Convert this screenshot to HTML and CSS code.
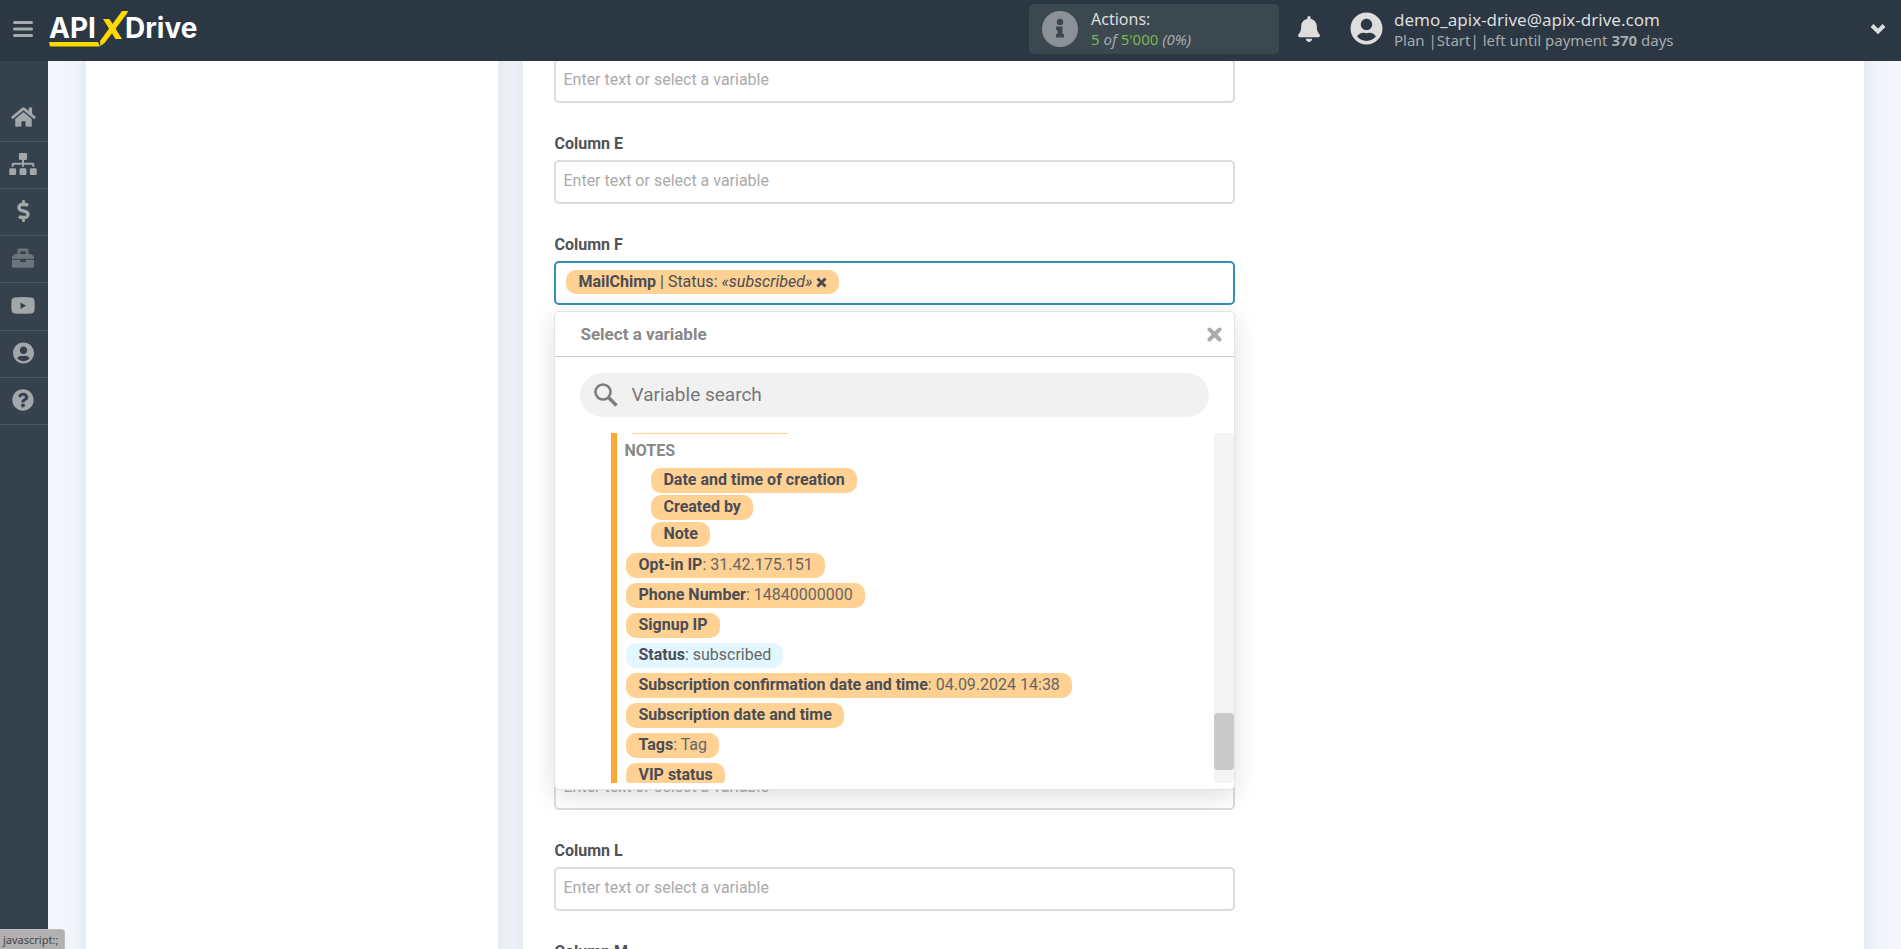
FILE: index.html
```html
<!DOCTYPE html>
<html lang="en">
<head>
<meta charset="utf-8">
<title>ApiX-Drive</title>
<link rel="stylesheet" href="styles.css">
</head>
<body>
<header class="topbar">
  <button class="icon-btn menu-btn" type="button" aria-label="Menu">
    <svg width="20" height="18" viewBox="0 0 20 18"><path d="M1.500 2.500h17M1.500 9h17M1.500 15.500h17" stroke="#a6abae" stroke-width="3" stroke-linecap="round"/></svg>
  </button>
  <a class="logo" href="#" aria-label="APIXDrive">
    <svg width="156" height="40" viewBox="0 0 156 40">
      <g fill="#fff" font-family="Inter, sans-serif" font-weight="700" font-size="28"><text x="0" y="29">API</text><text x="76" y="29">Drive</text></g>
      <g fill="#ffd800"><path d="M54 10h6.500l12.500 20h-6.500z"/><path d="M73 2h6l-1 2.500L56 33.500l-4.500 3.500-.5-5z"/><path d="M0 33h49l2 4.500H1z"/></g>
    </svg>
  </a>
  <div class="topbar-right">
    <div class="actions">
      <svg width="36" height="36" viewBox="0 0 36 36"><circle cx="18" cy="18" r="18" fill="#8b9297"/><circle cx="18" cy="11" r="3.200" fill="#3b4850"/><path d="M14 15.500h6.500V23H22v3.500h-8V23h1.500v-4H14z" fill="#3b4850"/></svg>
      <div class="actions-text">
        <div class="actions-title">Actions:</div>
        <div class="actions-count"><b>5</b> <i>of</i> <b>5'000</b> <i>(0%)</i></div>
      </div>
    </div>
    <button class="icon-btn bell" type="button" aria-label="Notifications">
      <svg width="22" height="26" viewBox="0 0 448 512" preserveAspectRatio="none" fill="#ddd"><path d="M224 512c35.320 0 63.970-28.650 63.970-64H160.030c0 35.350 28.650 64 63.970 64zm215.390-149.710c-19.320-20.760-55.470-51.990-55.470-154.290 0-77.700-54.480-139.900-127.940-155.160V32c0-17.670-14.320-32-31.980-32s-31.980 14.330-31.980 32v20.840C118.560 68.100 64.080 130.300 64.080 208c0 102.300-36.150 133.530-55.470 154.290-6 6.450-8.660 14.160-8.610 21.710.11 16.400 12.980 32 32.100 32h383.800c19.120 0 32-15.600 32.100-32 .05-7.550-2.610-15.270-8.610-21.710z"/></svg>
    </button>
    <div class="account">
      <svg width="33" height="33" viewBox="0 0 496 512" fill="#ddd"><path d="M248 8C111 8 0 119 0 256s111 248 248 248 248-111 248-248S385 8 248 8zm0 96c48.600 0 88 39.400 88 88s-39.400 88-88 88-88-39.400-88-88 39.400-88 88-88zm0 344c-58.700 0-111.300-26.600-146.500-68.200 18.800-35.400 55.600-59.800 98.500-59.800 2.400 0 4.800.4 7.100 1.100 13 4.200 26.600 6.900 40.900 6.900 14.300 0 28-2.700 40.900-6.900 2.300-.7 4.700-1.100 7.100-1.100 42.900 0 79.700 24.400 98.500 59.800C359.300 421.400 306.700 448 248 448z"/></svg>
      <div>
        <div class="account-mail">demo_apix-drive@apix-drive.com</div>
        <div class="account-plan">Plan |Start| left until payment <b>370</b> days</div>
      </div>
    </div>
    <button class="icon-btn" type="button" aria-label="Account menu">
      <svg width="16" height="12" viewBox="0 0 16 12"><path d="M2 2.500l6 6 6-6" fill="none" stroke="#ddd" stroke-width="4"/></svg>
    </button>
  </div>
</header>

<nav class="sidebar" aria-label="Main">
  <a href="#" aria-label="Home"><svg width="25" height="22" viewBox="0 0 576 512"><path d="M280.370 148.260L96 300.110V464a16 16 0 0 0 16 16l112.060-.29a16 16 0 0 0 15.920-16V368a16 16 0 0 1 16-16h64a16 16 0 0 1 16 16v95.640a16 16 0 0 0 16 16.050L464 480a16 16 0 0 0 16-16V300L295.670 148.260a12.190 12.190 0 0 0-15.300 0zM571.600 251.470L488 182.560V44.050a12 12 0 0 0-12-12h-56a12 12 0 0 0-12 12v72.610L318.470 43a48 48 0 0 0-61 0L4.340 251.470a12 12 0 0 0-1.600 16.900l25.500 31A12 12 0 0 0 45.150 301l235.220-193.740a12.190 12.190 0 0 1 15.300 0L530.900 301a12 12 0 0 0 16.900-1.600l25.500-31a12 12 0 0 0-1.700-16.930z"/></svg></a>
  <a href="#" aria-label="Connections"><svg width="28" height="22" viewBox="0 0 640 512"><path d="M128 352H32c-17.670 0-32 14.330-32 32v96c0 17.670 14.330 32 32 32h96c17.670 0 32-14.330 32-32v-96c0-17.670-14.330-32-32-32zm-24-80h192v48h48v-48h192v48h48v-57.590c0-21.170-17.230-38.410-38.410-38.410H344v-64h40c17.670 0 32-14.330 32-32V32c0-17.670-14.330-32-32-32H256c-17.670 0-32 14.330-32 32v96c0 17.670 14.330 32 32 32h40v64H94.410C73.230 224 56 241.230 56 262.410V320h48v-48zm264 80h-96c-17.670 0-32 14.330-32 32v96c0 17.670 14.330 32 32 32h96c17.670 0 32-14.330 32-32v-96c0-17.670-14.330-32-32-32zm240 0h-96c-17.670 0-32 14.330-32 32v96c0 17.670 14.330 32 32 32h96c17.670 0 32-14.330 32-32v-96c0-17.670-14.330-32-32-32z"/></svg></a>
  <a href="#" aria-label="Payments"><svg width="13" height="22" viewBox="0 0 288 512"><path d="M209.200 233.400l-108-31.600C88.700 198.200 80 186.500 80 173.500c0-16.300 13.200-29.500 29.500-29.500h66.300c12.200 0 24.200 3.700 34.200 10.500 6.100 4.100 14.300 3.100 19.500-2l34.800-34c7.100-6.900 6.100-18.400-1.800-24.500C238 74.800 207.400 64.100 176 64V16c0-8.800-7.200-16-16-16h-32c-8.800 0-16 7.200-16 16v48h-2.500C45.800 64-5.400 118.700.5 183.600c4.200 46.100 39.400 83.600 83.800 96.600l102.500 30c12.500 3.700 21.200 15.300 21.200 28.300 0 16.300-13.200 29.500-29.500 29.500h-66.300C100 368 88 364.300 78 357.500c-6.100-4.100-14.300-3.100-19.500 2l-34.800 34c-7.100 6.900-6.100 18.400 1.800 24.500 24.500 19.200 55.100 29.900 86.500 30v48c0 8.800 7.200 16 16 16h32c8.800 0 16-7.200 16-16v-48.200c46.600-.9 90.300-28.600 105.700-72.700 21.500-61.600-14.600-124.800-72.500-141.700z"/></svg></a>
  <a class="muted" href="#" aria-label="Projects"><svg width="22" height="22" viewBox="0 0 512 512"><path d="M502.630 214.630l-45.250-45.250c-6-6-14.140-9.380-22.630-9.380H384V80c0-26.510-21.490-48-48-48H176c-26.510 0-48 21.490-48 48v80H77.250c-8.490 0-16.620 3.370-22.630 9.380L9.370 214.630c-6 6-9.370 14.140-9.370 22.620V272h512v-34.750c0-8.480-3.370-16.620-9.370-22.620zM320 160H192V96h128v64zm0 176c0 8.840-7.160 16-16 16h-96c-8.840 0-16-7.160-16-16v-40H0v152c0 17.670 14.330 32 32 32h448c17.670 0 32-14.330 32-32V296H320v40z"/></svg></a>
  <a href="#" aria-label="Video"><svg width="24" height="23" viewBox="0 0 24 23"><path fill-rule="evenodd" d="M4 3.500Q12 2.600 20 3.500Q23.200 3.900 23.500 7Q23.900 11.500 23.500 16Q23.200 19.200 20 19.500Q12 20.200 4 19.500Q.8 19.200.5 16Q.1 11.500.5 7Q.8 3.900 4 3.500ZM9.500 8.500v6.500l5.500-3.200z"/></svg></a>
  <a href="#" aria-label="Profile"><svg width="21" height="22" viewBox="0 0 496 512"><path d="M248 8C111 8 0 119 0 256s111 248 248 248 248-111 248-248S385 8 248 8zm0 96c48.600 0 88 39.400 88 88s-39.400 88-88 88-88-39.400-88-88 39.400-88 88-88zm0 344c-58.700 0-111.300-26.600-146.500-68.200 18.800-35.400 55.600-59.800 98.500-59.800 2.400 0 4.800.4 7.100 1.100 13 4.200 26.600 6.900 40.900 6.900 14.300 0 28-2.700 40.900-6.900 2.300-.7 4.700-1.100 7.100-1.100 42.900 0 79.700 24.400 98.500 59.800C359.300 421.400 306.700 448 248 448z"/></svg></a>
  <a href="#" aria-label="Help"><svg width="22" height="22" viewBox="0 0 512 512"><path d="M504 256c0 136.997-111.043 248-248 248S8 392.997 8 256C8 119.083 119.043 8 256 8s248 111.083 248 248zM262.655 90c-54.497 0-89.255 22.957-116.549 63.758-3.536 5.286-2.353 12.415 2.715 16.258l34.699 26.310c5.205 3.947 12.621 3.008 16.665-2.122 17.864-22.658 30.113-35.797 57.303-35.797 20.429 0 45.698 13.148 45.698 32.958 0 14.976-12.363 22.667-32.534 33.976C247.128 238.528 216 254.941 216 296v4c0 6.627 5.373 12 12 12h56c6.627 0 12-5.373 12-12v-1.333c0-28.462 83.186-29.647 83.186-106.667 0-58.002-60.165-102-116.531-102zM256 338c-25.365 0-46 20.635-46 46 0 25.364 20.635 46 46 46s46-20.636 46-46c0-25.365-20.635-46-46-46z"/></svg></a>
</nav>

<main class="content">
  <section class="panel"></section>
  <section class="panel panel-form">
    <form class="fields">
      <div class="field"><label for="col-d">Column D</label><input id="col-d" type="text" placeholder="Enter text or select a variable"></div>
      <div class="field"><label for="col-e">Column E</label><input id="col-e" type="text" placeholder="Enter text or select a variable"></div>
      <div class="field field-open">
        <label id="label-f">Column F</label>
        <div class="token-box" role="textbox" tabindex="0" aria-labelledby="label-f">
          <span class="token"><span><b>MailChimp</b> | Status: <i>«subscribed»</i></span>
            <button class="icon-btn token-x" type="button" aria-label="Remove"><svg width="11" height="11" viewBox="0 0 11 11"><path d="M1.500 1.500l8 8M9.500 1.500l-8 8" stroke="#4a4d55" stroke-width="3"/></svg></button>
          </span>
        </div>
        <div class="picker">
          <div class="picker-head">
            <span>Select a variable</span>
            <button class="icon-btn" type="button" aria-label="Close"><svg width="15" height="15" viewBox="0 0 15 15"><path d="M2.500 2.500l10 10M12.500 2.500l-10 10" stroke="#aaa" stroke-width="4" stroke-linecap="round"/></svg></button>
          </div>
          <div class="search">
            <svg width="24" height="24" viewBox="0 0 24 24" fill="none" stroke="#7d7d82"><circle cx="9" cy="9" r="7.500" stroke-width="2.600"/><path d="M14.500 14.500l8 8" stroke-width="3.400"/></svg>
            <input type="text" placeholder="Variable search" aria-label="Variable search">
          </div>
          <div class="picker-body">
            <div class="var-list">
              <div class="cut-edge"></div>
              <div class="group-title">NOTES</div>
              <div class="nested">
                <button class="var" type="button"><b>Date and time of creation</b></button>
                <button class="var" type="button"><b>Created by</b></button>
                <button class="var" type="button"><b>Note</b></button>
              </div>
              <button class="var" type="button"><b>Opt-in IP</b>: 31.42.175.151</button>
              <button class="var" type="button"><b>Phone Number</b>: 14840000000</button>
              <button class="var" type="button"><b>Signup IP</b></button>
              <button class="var var-active" type="button"><b>Status</b>: subscribed</button>
              <button class="var" type="button"><b>Subscription confirmation date and time</b>: 04.09.2024 14:38</button>
              <button class="var" type="button"><b>Subscription date and time</b></button>
              <button class="var" type="button"><b>Tags</b>: Tag</button>
              <button class="var" type="button"><b>VIP status</b></button>
            </div>
            <div class="scrollbar"><div class="thumb"></div></div>
          </div>
        </div>
      </div>
      <div class="field"><label for="col-g">Column G</label><input id="col-g" type="text" placeholder="Enter text or select a variable"></div>
      <div class="field"><label for="col-h">Column H</label><input id="col-h" type="text" placeholder="Enter text or select a variable"></div>
      <div class="field"><label for="col-i">Column I</label><input id="col-i" type="text" placeholder="Enter text or select a variable"></div>
      <div class="field"><label for="col-j">Column J</label><input id="col-j" type="text" placeholder="Enter text or select a variable"></div>
      <div class="field"><label for="col-k">Column K</label><input id="col-k" type="text" placeholder="Enter text or select a variable"></div>
      <div class="field"><label for="col-l">Column L</label><input id="col-l" type="text" placeholder="Enter text or select a variable"></div>
      <div class="field"><label for="col-m">Column M</label><input id="col-m" type="text" placeholder="Enter text or select a variable"></div>
    </form>
  </section>
</main>
<div class="status-tip">javascript:;</div>
</body>
</html>
```
FILE: styles.css
```css
* { box-sizing: border-box; }
body {
  margin: 0;
  height: 100vh;
  overflow: hidden;
  background: #f3f7fd;
  color: #4a4d55;
  font: 16px/24px Roboto, sans-serif;
}
svg { display: block; flex: none; }
button { font: inherit; color: inherit; cursor: pointer; }
.icon-btn { padding: 0; border: 0; background: none; }

.topbar {
  position: fixed;
  inset: 0 0 auto 0;
  z-index: 10;
  height: 61px;
  padding: 0 15px 4px 13px;
  display: flex;
  align-items: center;
  background: #2b3743;
  font-family: "Noto Sans", sans-serif;
}
.logo { margin-left: 16px; }
.topbar-right { flex: 1; display: flex; align-items: center; justify-content: flex-end; }
.actions {
  width: 250px;
  height: 50px;
  margin-right: 19px;
  padding: 0 13px;
  display: flex;
  align-items: center;
  gap: 13px;
  border-radius: 5px;
  background: #3b4850;
  color: #ddd;
  line-height: 20px;
}
.actions-count { font-size: 15px; color: #a6abae; }
.actions-count b { font-weight: 400; color: #7ab84e; }
.bell { margin-right: 30px; }
.account { flex: 0 1 520px; display: flex; align-items: center; gap: 11px; }
.account-mail { color: #ddd; font-size: 17px; line-height: 22px; }
.account-plan { color: #a6abae; font-size: 15px; line-height: 18px; }

.sidebar {
  position: fixed;
  inset: 61px auto 0 0;
  z-index: 9;
  width: 48px;
  padding-top: 34px;
  background: #36414e;
  fill: #a2a7aa;
}
.sidebar a {
  padding: 11px 2px 13px 0;
  display: flex;
  justify-content: center;
  border-bottom: 1px solid #4b5764;
}
.sidebar .muted { fill: #6c757e; }

.content {
  min-height: 100%;
  margin-left: 48px;
  padding: 0 37px 0 38px;
  display: grid;
  grid-template-columns: minmax(0, 4fr) minmax(0, 13fr);
  gap: 25px;
}
.panel { background: #fff; box-shadow: 0 0 24px rgba(60, 70, 80, .12); }
.panel-form { padding: 31px 31px 0; }
.fields { max-width: 681px; }
.field { position: relative; margin-bottom: 29px; }
.field label { display: block; padding-bottom: 4px; font-weight: 700; color: #505257; }
.field > input, .token-box {
  display: block;
  width: 100%;
  height: 44px;
  padding: 0 7px 4px;
  border: 2px solid #dcdcdc;
  border-radius: 5px;
  background: #fff;
  font: inherit;
}
::placeholder { color: #aaa; opacity: 1; }
.token-box { padding: 7px 10px; border-color: #348fb7; }
.token {
  display: inline-flex;
  align-items: center;
  gap: 4px;
  height: 24px;
  padding: 0 12px;
  border-radius: 10px;
  background: #ffd193;
}
.token b, .var b { font-weight: 700; }

.picker {
  position: absolute;
  top: 100%;
  left: 0;
  right: 0;
  z-index: 2;
  margin-top: 6px;
  border: 1px solid #e4e4e4;
  border-radius: 5px;
  background: #fff;
  box-shadow: 0 6px 26px rgba(0, 0, 0, .13);
}
.picker-head {
  height: 45px;
  padding: 0 12px 0 25px;
  display: flex;
  align-items: center;
  justify-content: space-between;
  border-bottom: 1px solid #c9c9c9;
  color: #888;
  font-size: 17px;
  font-weight: 700;
}
.search {
  height: 44px;
  margin: 16px 25px;
  padding: 0 14px;
  display: flex;
  align-items: center;
  gap: 11px;
  border-radius: 22px;
  background: #f1f1f1;
}
.search input { flex: 1; border: 0; background: none; font: 19px/24px Roboto, sans-serif; }
.search input::placeholder { color: #777; }
.picker-body { height: 350px; margin-bottom: 6px; display: flex; justify-content: space-between; overflow: hidden; }
.var-list {
  height: max-content;
  margin-left: 56px;
  padding-left: 9px;
  display: flex;
  flex-direction: column;
  align-items: flex-start;
  gap: 5px;
  border-left: 6px solid #ffa735;
}
.cut-edge { width: 156px; height: 1px; margin-left: 6px; background: #ffd193; }
.group-title { margin-left: -2px; color: #888; font-weight: 700; }
.nested { display: flex; flex-direction: column; align-items: flex-start; gap: 2px; padding: 0 0 1px 25px; }
.var {
  height: 25px;
  padding: 0 12px 2px;
  border: 0;
  border-radius: 10px;
  background: #ffd193;
  color: #666;
}
.var b { color: #4a4d55; }
.var-active { background: #e2f7ff; }
.scrollbar { width: 20px; height: 350px; padding-top: 280px; border-radius: 4px; background: #f4f4f4; }
.thumb { height: 57px; border-radius: 4px; background: #cacaca; }

.status-tip {
  position: fixed;
  left: 0;
  bottom: 0;
  z-index: 20;
  padding: 1px 6px 1px 3px;
  border: 1px solid #bdbdbd;
  border-width: 1px 1px 0 0;
  border-top-right-radius: 4px;
  background: #b1b1b1;
  color: #444;
  font: 11px/17px "Noto Sans", sans-serif;
}
```
